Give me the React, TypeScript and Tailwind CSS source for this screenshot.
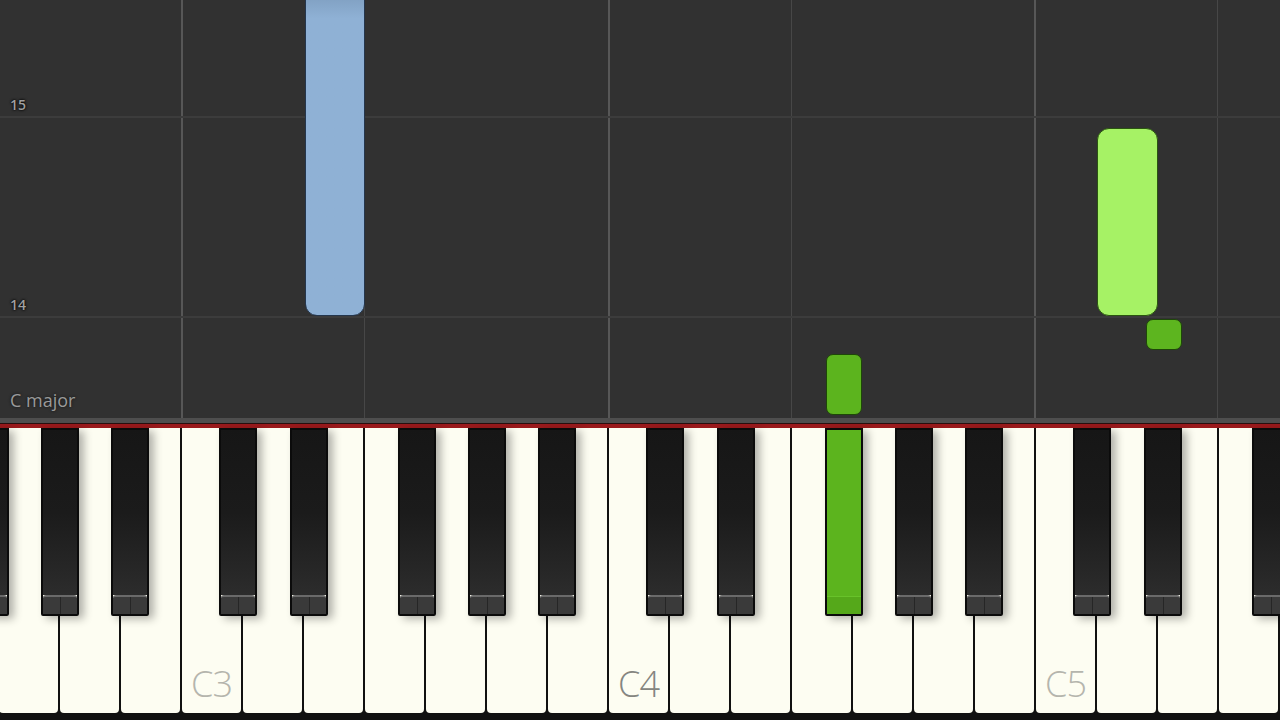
import React from "react";

const WHITE_W = 61;
const OCTAVE = WHITE_W * 7;
const BLACK_OFFSETS = [37, 108, 216, 286, 356];
const OCTAVE_STARTS = [182 - OCTAVE, 182, 609, 1036];

const whiteLabels: Record<number, string> = { 3: "C3", 10: "C4", 17: "C5" };

const blackKeys = OCTAVE_STARTS.flatMap((c) => BLACK_OFFSETS.map((o) => c + o)).filter(
  (x) => x > -37 && x < 1280
);

function WhiteKey({ label }: { label?: string }) {
  return (
    <div className="flex h-full w-[59px] shrink-0 mr-[2px] items-end rounded-b-[4px] bg-[#fdfdf2] pl-[9px] pb-[11px]">
      {label && (
        <span
          className={`text-[36px] leading-none font-light tracking-tight ${
            label === "C4" ? "text-[#858580]" : "text-[#b5b5ad]"
          }`}
        >
          {label}
        </span>
      )}
    </div>
  );
}

function BlackKey({ left, pressed }: { left: number; pressed?: boolean }) {
  return (
    <div
      className="absolute top-0 h-[188px] w-[38px] border-2 border-[#0b0b0b] rounded-b-[2px] shadow-[5px_3px_9px_rgba(0,0,0,0.3)] flex flex-col overflow-hidden"
      style={{ left }}
    >
      {pressed ? (
        <>
          <div className="flex-1 bg-[#5cb41e]" />
          <div className="h-[18px] bg-[#55a81a] border-t border-[#68c22a]" />
        </>
      ) : (
        <>
          <div className="flex-1 bg-gradient-to-b from-[#161616] via-[#1b1b1b] to-[#2c2c2c]" />
          <div className="h-[19px] bg-[#3a3a3a] border-t-2 border-[#6a6a6a] rounded-t-[3px] flex">
            <div className="flex-1 border-r border-[#262626]" />
            <div className="flex-1" />
          </div>
        </>
      )}
    </div>
  );
}

function RowLabel({ children, big }: { children: React.ReactNode; big?: boolean }) {
  return (
    <span
      className={
        big
          ? "text-[18px] leading-none text-[#9a9a9a] [text-shadow:0_0_3px_#111]"
          : "text-[14px] leading-none font-semibold text-[#a0a0a0] [text-shadow:0_0_2px_#000,0_0_3px_#000]"
      }
    >
      {children}
    </span>
  );
}

export default function App() {
  return (
    <div
      className="w-[1280px] h-[720px] overflow-hidden bg-[#313131] flex flex-col"
      style={{ fontFamily: '"Open Sans", "Liberation Sans", sans-serif' }}
    >
      {/* note roll */}
      <div className="relative h-[418px] shrink-0 overflow-hidden">
        {/* beat columns */}
        <div className="absolute inset-0 flex">
          <div className="w-[183px] border-r-2 border-[#575757]" />
          <div className="w-[182px] border-r border-[#474747]" />
          <div className="w-[245px] border-r-2 border-[#575757]" />
          <div className="w-[182px] border-r border-[#474747]" />
          <div className="w-[244px] border-r-2 border-[#575757]" />
          <div className="w-[182px] border-r border-[#474747]" />
          <div className="flex-1" />
        </div>

        {/* measure rows */}
        <div className="absolute inset-0 flex flex-col">
          <div className="h-[118px] flex items-end pl-[10px] pb-[4px] border-b-2 border-[#3c3c3c]">
            <RowLabel>15</RowLabel>
          </div>
          <div className="h-[200px] flex items-end pl-[10px] pb-[4px] border-b-2 border-[#3c3c3c]">
            <RowLabel>14</RowLabel>
          </div>
          <div className="flex-1 flex items-end pl-[10px] pb-[9px]">
            <RowLabel big>C major</RowLabel>
          </div>
        </div>

        {/* falling notes */}
        <div className="absolute left-[305px] top-[-12px] w-[60px] h-[328px] rounded-[12px] bg-gradient-to-b from-[#7b9abb] to-[#8fb1d5] to-[9%] border border-[#24364d]" />
        <div className="absolute left-[1097px] top-[128px] w-[61px] h-[188px] rounded-[12px] bg-[#a6f265] border-[1.5px] border-[#2a5510]" />
        <div className="absolute left-[1146px] top-[319px] w-[36px] h-[31px] rounded-[7px] bg-[#5db51f] border border-[#1e4708]" />
        <div className="absolute left-[826px] top-[354px] w-[36px] h-[61px] rounded-[7px] bg-[#5cb41e] border border-[#1e4708]" />
      </div>

      {/* keyboard top edge */}
      <div className="h-[5px] shrink-0 bg-[#4e4e4e]" />
      <div className="h-[1px] shrink-0 bg-[#2a1010]" />
      <div className="h-[4px] shrink-0 bg-[#9a1a1c]" />

      {/* keyboard */}
      <div className="relative h-[285px] shrink-0 bg-[#111]">
        <div className="flex h-full ml-[-1px]">
          {Array.from({ length: 21 }).map((_, i) => (
            <WhiteKey key={i} label={whiteLabels[i]} />
          ))}
        </div>
        {blackKeys.map((x) => (
          <BlackKey key={x} left={x} pressed={x === 825} />
        ))}
      </div>
      <div className="flex-1 bg-[#111]" />
    </div>
  );
}
